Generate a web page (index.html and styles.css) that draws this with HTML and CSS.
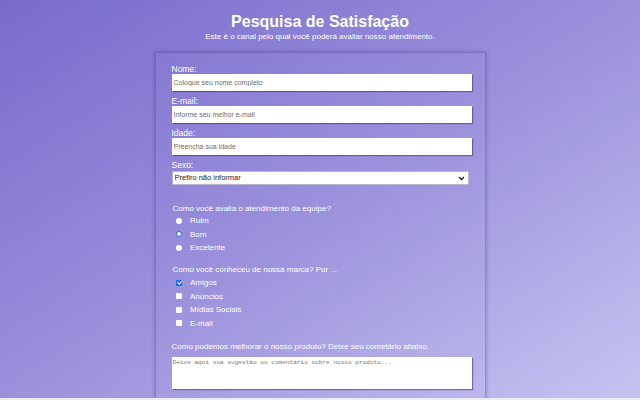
FILE: index.html
```html
<!DOCTYPE html>
<html lang="pt-BR">
<head>
<meta charset="utf-8">
<title>Pesquisa de Satisfação</title>
<link rel="stylesheet" href="styles.css">
</head>
<body>
<header class="top">
  <h1 class="title">Pesquisa de Satisfação</h1>
  <p class="subtitle">Este é o canal pelo qual você poderá avaliar nosso atendimento.</p>
</header>
<form class="card">
  <label class="lbl" for="nome">Nome:</label>
  <input class="field" id="nome" type="text" placeholder="Coloque seu nome completo">
  <label class="lbl" for="email">E-mail:</label>
  <input class="field" id="email" type="email" placeholder="Informe seu melhor e-mail">
  <label class="lbl" for="idade">Idade:</label>
  <input class="field" id="idade" type="number" placeholder="Preencha sua idade">
  <label class="lbl" for="sexo">Sexo:</label>
  <div class="sel-wrap">
    <select class="sel" id="sexo">
      <option>Prefiro não informar</option>
      <option>Feminino</option>
      <option>Masculino</option>
    </select>
    <svg class="chev" width="7" height="5" viewBox="0 0 7 5"><path d="M1 1 L3.5 3.5 L6 1" fill="none" stroke="#222" stroke-width="1.4"/></svg>
  </div>

  <p class="question q1">Como você avalia o atendimento da equipe?</p>
  <div class="opts">
    <label class="opt"><input class="radio" type="radio" name="av"> Ruim</label>
    <label class="opt"><input class="radio" type="radio" name="av" checked> Bom</label>
    <label class="opt"><input class="radio" type="radio" name="av"> Excelente</label>
  </div>

  <p class="question q2">Como você conheceu de nossa marca? Por ...</p>
  <div class="opts">
    <label class="opt"><input class="check" type="checkbox" checked> Amigos</label>
    <label class="opt"><input class="check" type="checkbox"> Anúncios</label>
    <label class="opt"><input class="check" type="checkbox"> Mídias Sociais</label>
    <label class="opt"><input class="check" type="checkbox"> E-mail</label>
  </div>

  <p class="question q3">Como podemos melhorar o nosso produto? Deixe seu cometário abaixo.</p>
  <textarea class="area" placeholder="Deixe aqui sua sugestão ou comentário sobre nosso produto..."></textarea>
</form>
</body>
</html>
```

FILE: styles.css
```css
html {
  background: #ececf6;
}
body {
  margin: 0;
  height: 398px;
  background: linear-gradient(to bottom right, #786bcc 0%, #9a90dc 50%, #c6c3f1 100%);
  font-family: "Liberation Sans", Arial, sans-serif;
  color: #fff;
}
.top {
  text-align: center;
  padding-top: 12px;
}
.title {
  margin: 0;
  font-size: 16px;
  line-height: 20px;
  font-weight: bold;
}
.subtitle {
  margin: 0;
  font-size: 8px;
  line-height: 10px;
}
.card {
  box-sizing: border-box;
  width: 331px;
  margin: 10px auto 0;
  padding: 11px 13px 10px 16px;
  border: 1px solid rgba(80, 70, 150, 0.35);
  box-shadow: 0 0 4px rgba(40, 30, 100, 0.35);
  display: flex;
  flex-direction: column;
  height: 360px;
}
.lbl {
  display: block;
  font-size: 8.5px;
  line-height: 10px;
}
.field {
  box-sizing: border-box;
  height: 17px;
  margin: 0 0 5px;
  padding: 0 2px;
  border: none;
  box-shadow: 1px 1px 1px rgba(60, 50, 110, 0.55);
  background: #fff;
  font-family: "Liberation Sans", Arial, sans-serif;
  font-size: 7px;
  color: #333;
}
.field::placeholder {
  color: #6d6d6d;
}
.field::-webkit-outer-spin-button,
.field::-webkit-inner-spin-button {
  -webkit-appearance: none;
}
.sel-wrap {
  position: relative;
  width: 297px;
  height: 14px;
  margin-top: 1px;
  flex: none;
}
.sel {
  display: block;
  box-sizing: border-box;
  width: 100%;
  height: 14px;
  margin: 0;
  padding: 0 2px;
  border: 1px solid #b9b6cc;
  border-radius: 1px;
  background: #fff;
  -webkit-appearance: none;
  appearance: none;
  font-family: "Liberation Sans", Arial, sans-serif;
  font-size: 7.5px;
  line-height: 12px;
  color: #222;
}
.chev {
  position: absolute;
  right: 4px;
  top: 5px;
  pointer-events: none;
}
.question {
  margin: 0;
  font-size: 8px;
  line-height: 10px;
  padding-left: 1px;
}
.q1 {
  margin-top: 19px;
  margin-bottom: 0;
}
.q2 {
  margin-top: 10px;
  margin-bottom: 1px;
}
.q3 {
  margin-top: 12px;
  padding-left: 0;
}
.opts {
  display: flex;
  flex-direction: column;
  padding-left: 4px;
}
.opt {
  display: flex;
  align-items: center;
  gap: 8px;
  height: 13.6px;
  font-size: 8px;
}
.radio,
.check {
  -webkit-appearance: none;
  appearance: none;
  box-sizing: border-box;
  width: 6px;
  height: 6px;
  margin: 0 0 0 0.5px;
  background: #fff;
  border: none;
  position: relative;
}
.radio {
  border-radius: 50%;
}
.radio:checked {
  border: 1.5px solid #1a6ff0;
  background: #fff;
}
.check {
  border-radius: 1px;
}
.check:checked {
  background: #1a6ff0;
}
.check:checked::after {
  content: "";
  position: absolute;
  left: 1.6px;
  top: 0.2px;
  width: 1.6px;
  height: 3.4px;
  border: solid #fff;
  border-width: 0 1px 1px 0;
  transform: rotate(40deg);
}
.area {
  box-sizing: border-box;
  height: 32px;
  margin: 5px 0 0;
  padding: 2px 1px;
  border: none;
  box-shadow: 1px 1px 1px rgba(60, 50, 110, 0.55);
  background: #fff;
  resize: none;
  font-family: "Liberation Mono", monospace;
  font-size: 6.1px;
}
.area::placeholder {
  color: #777;
}
```
